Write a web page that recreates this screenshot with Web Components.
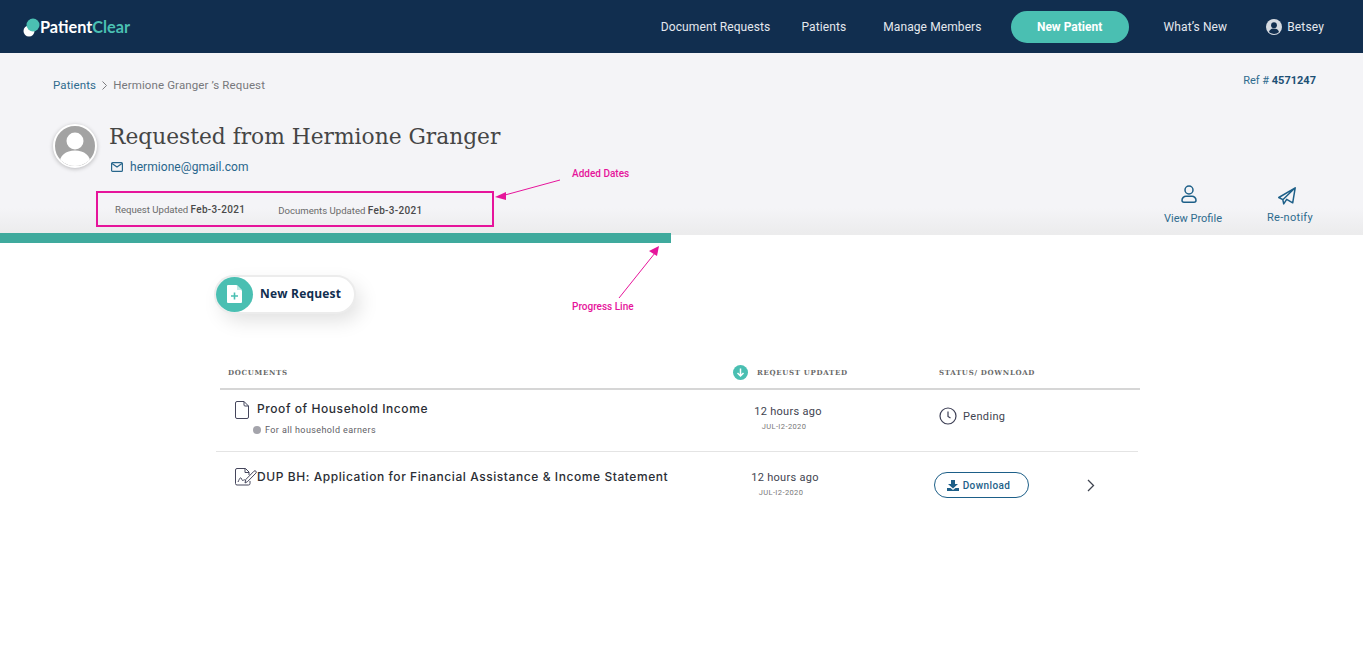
<!DOCTYPE html>
<html lang="en">
<head>
<meta charset="utf-8">
<title>PatientClear</title>
<style>
  html, body { margin: 0; padding: 0; background: #fff; }
  body { position: relative; height: 660px; overflow: hidden; font-family: Roboto, "Liberation Sans", sans-serif; }
</style>
</head>
<body>
<app-header></app-header>
<request-banner></request-banner>
<progress-line></progress-line>
<new-request-button></new-request-button>
<doc-table>
  <doc-row title-text="Proof of Household Income" note="For all household earners" kind="file" status="pending" style="--row-height: 62px"></doc-row>
  <doc-row title-text="DUP BH: Application for Financial Assistance &amp; Income Statement" kind="sign" status="download" style="--time-shift: 6px; --row-height: 70px; --time-top: 18px"></doc-row>
</doc-table>
<note-layer></note-layer>

<script>
class AppHeader extends HTMLElement {
  constructor() {
    super();
    this.attachShadow({ mode: 'open' });
    this.shadowRoot.innerHTML = `
      <style>
        :host {
          display: flex;
          align-items: center;
          height: 53px;
          padding: 0 39px 0 23px;
          background: #112e4f;
          color: #e4e8ee;
          font-size: 12px;
          box-sizing: border-box;
        }
        .logo { display: flex; align-items: center; font: 700 16.300px Lato, sans-serif; color: #fff; }
        .logo svg { display: block; margin-right: -1px; }
        .logo b { color: #4bc0b3; font-weight: 700; }
        nav { margin-left: auto; display: flex; align-items: center; }
        a { letter-spacing: 0.1px; }
        .btn {
          width: 118px;
          height: 32px;
          margin: 0 35px 0 29px;
          border-radius: 16px;
          background: #4abfb2;
          color: #fff;
          font-weight: 700;
          font-size: 12px;
          display: flex;
          align-items: center;
          justify-content: center;
        }
        .user { display: flex; align-items: center; gap: 5px; margin-left: 39px; letter-spacing: 0.15px; }
      </style>
      <div class="logo">
        <svg width="18" height="24" viewBox="0 0 18 24"><circle cx="6" cy="16" r="5.5" fill="#fff"/><circle cx="10" cy="10" r="6.5" fill="#4bc0b3"/></svg>
        <span>Patient<b>Clear</b></span>
      </div>
      <nav>
        <a>Document Requests</a>
        <a style="margin-left:31px">Patients</a>
        <a style="margin-left:37px">Manage Members</a>
        <div class="btn">New Patient</div>
        <a>What’s New</a>
        <div class="user">
          <svg width="16" height="16" viewBox="0 0 16 16"><circle cx="8" cy="8" r="8" fill="#d5dae1"/><circle cx="8" cy="6.2" r="2.9" fill="#112e4f"/><path d="M3 13c.6-2.6 2.6-3.6 5-3.6s4.400 1 5 3.600c-1.300 1.200-3 1.900-5 1.900s-3.700-.7-5-1.900z" fill="#112e4f"/></svg>
          <span>Betsey</span>
        </div>
      </nav>
    `;
  }
}

class RequestBanner extends HTMLElement {
  constructor() {
    super();
    this.attachShadow({ mode: 'open' });
    this.shadowRoot.innerHTML = `
      <style>
        :host {
          display: block;
          height: 180px;
          box-sizing: border-box;
          padding: 19px 47px 0 53px;
          background: linear-gradient(#f4f4f7 0, #f4f4f7 155px, #ececed 180px);
          color: #77787c;
          font-size: 11.500px;
        }
        .top { display: flex; justify-content: space-between; height: 52px; }
        .crumbs { display: flex; align-items: center; height: 16px; margin-top: 5px; letter-spacing: 0.12px; }
        .crumbs a { color: #2e6b8e; }
        .crumbs svg { margin: 0 6px 0 6px; }
        .ref { color: #2e6b8e; font-size: 11px; line-height: 18px; }
        .ref b { color: #1d5075; font-weight: 700; }
        .who { display: flex; height: 67px; }
        .avatar {
          width: 44px;
          height: 44px;
          box-sizing: border-box;
          border-radius: 50%;
          border: 2px solid #fff;
          box-shadow: 0 1px 4px rgba(0,0,0,.25);
          overflow: hidden;
          background: #a3a3a3;
          margin-right: 12px;
        }
        .avatar svg { display: block; }
        h1 { margin: 1px 0 0; font: 400 21.750px/24px "DejaVu Serif", serif; color: #454545; }
        .mail { display: flex; align-items: center; gap: 7px; margin: 10px 0 0 2px; color: #28668c; font-size: 12px; letter-spacing: 0.06px; line-height: 16px; }
        .bottom { display: flex; justify-content: space-between; }
        .dates {
          width: 398px;
          height: 36px;
          box-sizing: border-box;
          margin-left: 43px;
          border: 2px solid #e6149b;
          display: flex;
          align-items: center;
          padding-left: 17px;
          font-size: 9.600px;
          color: #6a6a6a;
        }
        .dates b { color: #4a4a4a; font-weight: 500; font-size: 10px; letter-spacing: 0.3px; }
        .dates span + span { margin-left: 33px; position: relative; top: 1px; }
        .actions { display: flex; margin: -6px -4px 0 0; color: #2e6b8e; font-size: 11px; }
        .action { display: flex; flex-direction: column; align-items: center; }
        .action svg { display: block; }
        .profile svg { margin: 0 8px 9px 0; }
        .notify svg { margin: 2px 6px 6px 0; }
      </style>
      <div class="top">
        <div class="crumbs">
          <a>Patients</a>
          <svg width="5" height="9" viewBox="0 0 5 9"><path d="M.5.5l4 4-4 4" fill="none" stroke="#7d7d80"/></svg>
          <span>Hermione Granger ’s Request</span>
        </div>
        <div class="ref">Ref # <b>4571247</b></div>
      </div>
      <div class="who">
        <div class="avatar">
          <svg width="40" height="40" viewBox="0 0 40 40"><circle cx="20" cy="15" r="8.500" fill="#fff"/><path d="M4 40c0-11 7-15.500 16-15.500S36 29 36 40z" fill="#fff"/></svg>
        </div>
        <div>
          <h1>Requested from Hermione Granger</h1>
          <div class="mail">
            <svg width="12" height="10" viewBox="0 0 12 10"><rect x=".6" y=".6" width="10.800" height="8.800" rx="1" fill="none" stroke="#28668c" stroke-width="1.200"/><path d="M1 1.500l5 3.500 5-3.500" fill="none" stroke="#28668c" stroke-width="1.200"/></svg>
            <span>hermione@gmail.com</span>
          </div>
        </div>
      </div>
      <div class="bottom">
        <div class="dates">
          <span>Request Updated <b>Feb-3-2021</b></span>
          <span>Documents Updated <b>Feb-3-2021</b></span>
        </div>
        <div class="actions">
          <div class="action profile" style="width:60px">
            <svg width="16" height="18" viewBox="0 0 16 18" fill="none" stroke="#1d5f88" stroke-width="1.500"><circle cx="8" cy="5" r="4"/><path d="M3 17.200h10a2 2 0 0 0 2-2c0-2.200-2-4-4-4H5c-2 0-4 1.800-4 4a2 2 0 0 0 2 2z"/></svg>
            <span>View Profile</span>
          </div>
          <div class="action notify" style="width:60px;margin-left:37px">
            <svg width="18" height="18" viewBox="0 0 18 18" fill="none" stroke="#1d5f88" stroke-width="1.500" stroke-linejoin="round"><path d="M17.200.8L.8 10.500l4 2.200L17.200.8l-2.500 15-6-3.500-3 4.600-.9-4.200"/></svg>
            <span style="letter-spacing:.3px">Re-notify</span>
          </div>
        </div>
      </div>
    `;
  }
}

class ProgressLine extends HTMLElement {
  constructor() {
    super();
    this.attachShadow({ mode: 'open' });
    this.shadowRoot.innerHTML = `
      <style>
        :host { display: block; height: 10px; background: linear-gradient(#ececed 2px, #fff 2px); }
        div { width: 671px; height: 100%; background: #3faa9d; }
      </style>
      <div></div>
    `;
  }
}

class NewRequestButton extends HTMLElement {
  constructor() {
    super();
    this.attachShadow({ mode: 'open' });
    this.shadowRoot.innerHTML = `
      <style>
        :host {
          display: flex;
          align-items: center;
          width: 138px;
          height: 35px;
          margin: 34px 0 0 216px;
          border-radius: 18px;
          background: #fff;
          box-shadow: 0 0 0 2px #ececec, 6px 8px 20px rgba(0,0,0,.13);
          color: #112e4f;
          font: 700 12px "Open Sans", sans-serif;
          letter-spacing: 0.2px;
        }
        .ic { width: 37px; height: 35px; border-radius: 50%; background: #4abfb2; display: flex; align-items: center; justify-content: center; margin-right: 7px; }
        .ic svg { position: relative; top: -1px; }
        span { position: relative; top: -1px; }
      </style>
      <div class="ic">
        <svg width="15" height="18" viewBox="0 0 15 18"><path d="M1 0h8.500L15 5.500V17a1 1 0 0 1-1 1H1a1 1 0 0 1-1-1V1a1 1 0 0 1 1-1z" fill="#fff"/><path d="M10 0l5 5h-5z" fill="#bfe9e3"/><path d="M7.500 7.500v7M4 11h7" stroke="#4abfb2" stroke-width="1.600"/></svg>
      </div>
      <span>New Request</span>
    `;
  }
}

class DocTable extends HTMLElement {
  constructor() {
    super();
    this.attachShadow({ mode: 'open' });
    this.shadowRoot.innerHTML = `
      <style>
        :host { display: block; width: 922px; margin: 44px 0 0 216px; }
        .head {
          display: grid;
          grid-template-columns: 517px 194px 1fr;
          align-items: center;
          height: 34px;
          margin: 0 -2px 0 4px;
          padding-left: 8px;
          border-bottom: 2px solid #d6d6d6;
          box-sizing: border-box;
          font: 700 7px "DejaVu Serif", serif;
          letter-spacing: 0.68px;
          color: #6a6a6a;
        }
        .sort { display: flex; align-items: center; gap: 9px; margin-left: -12px; }
        .sort svg { display: block; }
      </style>
      <div class="head">
        <span>DOCUMENTS</span>
        <span class="sort">
          <svg width="15" height="15" viewBox="0 0 15 15"><circle cx="7.500" cy="7.500" r="7.500" fill="#4abfb2"/><path d="M7.500 3.500v7.500M4.500 8l3 3 3-3" fill="none" stroke="#fff" stroke-width="1.500"/></svg>
          REQEUST UPDATED
        </span>
        <span>STATUS/ DOWNLOAD</span>
      </div>
      <slot></slot>
    `;
  }
}

class DocRow extends HTMLElement {
  connectedCallback() {
    if (this.shadowRoot) return;
    this.attachShadow({ mode: 'open' });
    const icons = {
      file: `<svg width="14" height="18" viewBox="0 0 14 18" fill="none" stroke="#45465c"><path d="M2 .5h7l4.500 4.500v11a1.500 1.500 0 0 1-1.500 1.500H2A1.500 1.500 0 0 1 .5 16V2A1.500 1.500 0 0 1 2 .5z"/><path d="M9 .5V4a1 1 0 0 0 1 1h3.500"/></svg>`,
      sign: `<svg width="22" height="18" viewBox="0 0 22 18" fill="none" stroke="#45465c"><path d="M15 13v2.500a1.500 1.500 0 0 1-1.500 1.500H2A1.500 1.500 0 0 1 .5 15.500V2A1.500 1.500 0 0 1 2 .5h8.500L14 4v3"/><path d="M10 .5V4.500h4"/><path d="M3 14c1-2 2-5 3-4s1 3 2 2.500 1-1 2-.5"/><path d="M10 15l.8-3.500L19 3.200a1.300 1.300 0 0 1 1.900 0 1.300 1.300 0 0 1 0 1.900L12.700 13.500z"/></svg>`
    };
    const status = this.getAttribute('status') === 'download'
      ? `<div class="dl">
           <svg width="12" height="11" viewBox="0 0 12 11" fill="#1d5f88"><path d="M4 0h4v4h3L6 8.500 1 4h3z"/><path d="M0 8h3.500L6 10l2.500-2H12v3H0z"/></svg>
           <span>Download</span>
         </div>
         <svg class="chev" width="8" height="13" viewBox="0 0 8 13"><path d="M1 1l5.500 5.500L1 12" fill="none" stroke="#3f4450" stroke-width="1.300"/></svg>`
      : `<div class="pend">
           <svg width="18" height="18" viewBox="0 0 18 18" fill="none" stroke="#3d3f55" stroke-width="1.200"><circle cx="9" cy="9" r="8"/><path d="M9 4.500V9.500l2.500 1.500"/></svg>
           <span>Pending</span>
         </div>`;
    const note = this.getAttribute('note');
    this.shadowRoot.innerHTML = `
      <style>
        :host {
          display: grid;
          grid-template-columns: 516px 112px 1fr;
          height: var(--row-height, 64px);
          box-sizing: border-box;
          font-size: 12px;
          color: #3f4450;
        }
        :host(:first-of-type) { border-bottom: 1px solid #e4e4e4; }
        .doc { padding: 11px 0 0 19px; }
        .doc.sign { padding-top: 16px; }
        .line { display: flex; align-items: flex-start; gap: 8px; }
        .line svg { flex: none; display: block; }
        .title { font: 500 12px/18px Inter, Roboto, sans-serif; letter-spacing: 0.57px; color: #2b2e35; margin-top: -1px; white-space: nowrap; }
        .sign .line { gap: 0; }
        .sign .title { margin-top: 0; }
        .note { display: flex; align-items: center; gap: 4px; margin: 6px 0 0 18px; font-size: 9px; letter-spacing: 0.4px; color: #5f6066; }
        .note i { width: 8px; height: 8px; border-radius: 50%; background: #a4a4ab; }
        .time { text-align: center; padding: var(--time-top, 14px) var(--time-shift, 0) 0 0; letter-spacing: 0.3px; line-height: 15px; font-size: 11px; }
        .time small { display: block; padding-right: 8px; font-size: 7.500px; letter-spacing: 0.4px; color: #777; line-height: 15px; }
        .status { display: flex; align-items: flex-start; padding: 18px 0 0 95px; }
        .pend { display: flex; align-items: center; gap: 6px; letter-spacing: 0.35px; font-size: 11px; margin-top: -1px; }
        .dl {
          width: 95px;
          height: 26px;
          margin: 2px 0 0 -5px;
          box-sizing: border-box;
          border: 1.500px solid #1d5f88;
          border-radius: 13px;
          color: #1d5f88;
          display: flex;
          align-items: center;
          justify-content: center;
          gap: 4px;
          padding-right: 6px;
          font-size: 10px;
          font-weight: 500;
          letter-spacing: 0.4px;
        }
        .chev { margin: 9px 0 0 58px; }
      </style>
      <div class="doc ${this.getAttribute('kind')}">
        <div class="line">${icons[this.getAttribute('kind')]}<span class="title">${this.getAttribute('title-text').replace('&', '&amp;')}</span></div>
        ${note ? `<div class="note"><i></i><span>${note}</span></div>` : ''}
      </div>
      <div class="time">12 hours ago<small>JUL-I2-2020</small></div>
      <div class="status">${status}</div>
    `;
  }
}

class NoteLayer extends HTMLElement {
  constructor() {
    super();
    this.attachShadow({ mode: 'open' });
    this.shadowRoot.innerHTML = `
      <style>
        :host { position: absolute; inset: 0; pointer-events: none; color: #e6149b; font-size: 10px; font-weight: 500; }
        span { position: absolute; line-height: 12px; }
        svg { position: absolute; left: 0; top: 0; }
      </style>
      <span style="left:572px;top:168px">Added Dates</span>
      <span style="left:572px;top:301px">Progress Line</span>
      <svg width="1363" height="660">
        <path d="M560 180L505 195" stroke="#e6149b" fill="none"/>
        <path d="M495 197L506 192 506 200z" fill="#e6149b"/>
        <path d="M619 298L655 253" stroke="#e6149b" fill="none"/>
        <path d="M659 246L649 251 657 256z" fill="#e6149b"/>
      </svg>
    `;
  }
}

customElements.define('app-header', AppHeader);
customElements.define('request-banner', RequestBanner);
customElements.define('progress-line', ProgressLine);
customElements.define('new-request-button', NewRequestButton);
customElements.define('doc-table', DocTable);
customElements.define('doc-row', DocRow);
customElements.define('note-layer', NoteLayer);
</script>
</body>
</html>
